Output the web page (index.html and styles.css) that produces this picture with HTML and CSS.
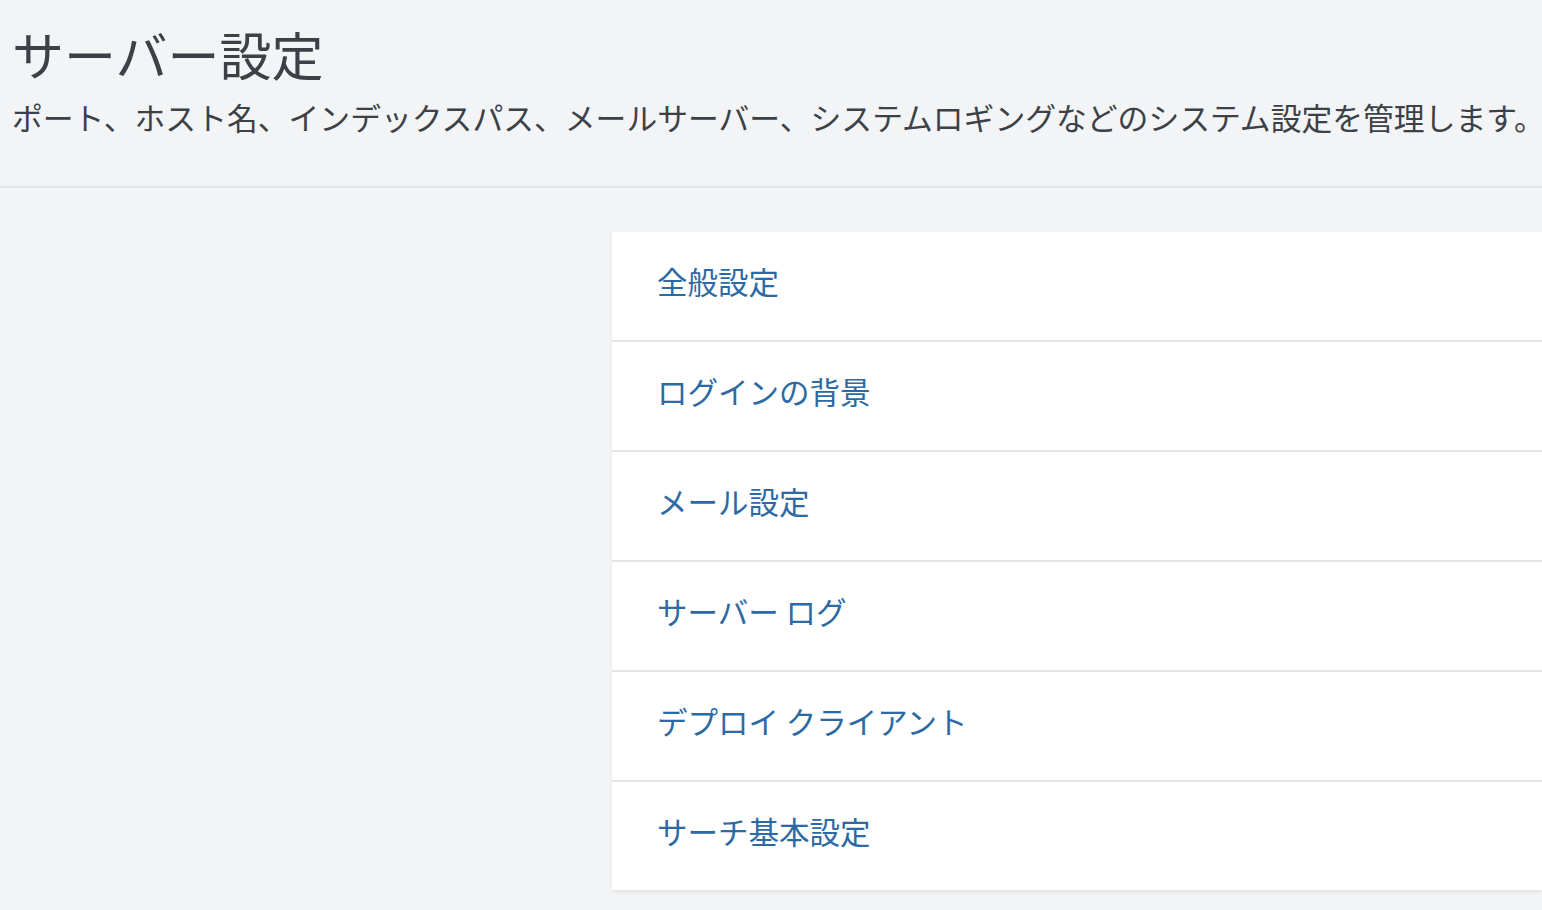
FILE: index.html
```html
<!DOCTYPE html>
<html lang="ja">
<head>
<meta charset="utf-8">
<title>サーバー設定</title>
<link rel="stylesheet" href="styles.css">
</head>
<body>
<header class="page-header">
  <h1 class="page-title">サーバー設定</h1>
  <p class="page-desc">ポート、ホスト名、インデックスパス、メールサーバー、システムロギングなどのシステム設定を管理します。</p>
</header>
<main class="page-body">
  <div class="side"></div>
  <ul class="settings-list">
    <li class="settings-item"><a class="settings-link" href="#">全般設定</a></li>
    <li class="settings-item"><a class="settings-link" href="#">ログインの背景</a></li>
    <li class="settings-item"><a class="settings-link" href="#">メール設定</a></li>
    <li class="settings-item"><a class="settings-link" href="#">サーバー ログ</a></li>
    <li class="settings-item"><a class="settings-link" href="#">デプロイ クライアント</a></li>
    <li class="settings-item"><a class="settings-link" href="#">サーチ基本設定</a></li>
  </ul>
</main>
</body>
</html>
```

FILE: styles.css
```css
html, body {
  margin: 0;
  padding: 0;
  background: #f2f4f6;
  overflow: hidden;
}
body {
  font-family: "Noto Sans CJK JP", "Noto Sans", sans-serif;
  color: #3c4148;
  width: 1542px;
  height: 910px;
}
.page-header {
  padding: 22px 0 0 12px;
  height: 164px;
  border-bottom: 2px solid #e1e4e8;
}
.page-title {
  margin: 0;
  font-size: 52px;
  font-weight: 400;
  line-height: 64px;
  color: #3c4148;
}
.page-desc {
  margin: 9px 0 0 0;
  font-size: 30.8px;
  line-height: 44px;
  white-space: nowrap;
  color: #3c4148;
}
.page-body {
  display: grid;
  grid-template-columns: 612px 1fr;
  padding-top: 44px;
}
.settings-list {
  list-style: none;
  margin: 0;
  padding: 0;
  background: #ffffff;
  box-shadow: 0 2px 4px rgba(0, 0, 0, 0.08);
}
.settings-item {
  height: 110px;
  box-sizing: border-box;
  display: flex;
  align-items: center;
  padding: 0 0 11px 45px;
  border-bottom: 2px solid #e2e6ea;
}
.settings-item:last-child {
  border-bottom: none;
  height: 108px;
}
.settings-link {
  font-size: 30.5px;
  color: #2d6aa3;
  text-decoration: none;
  line-height: 40px;
}
```
